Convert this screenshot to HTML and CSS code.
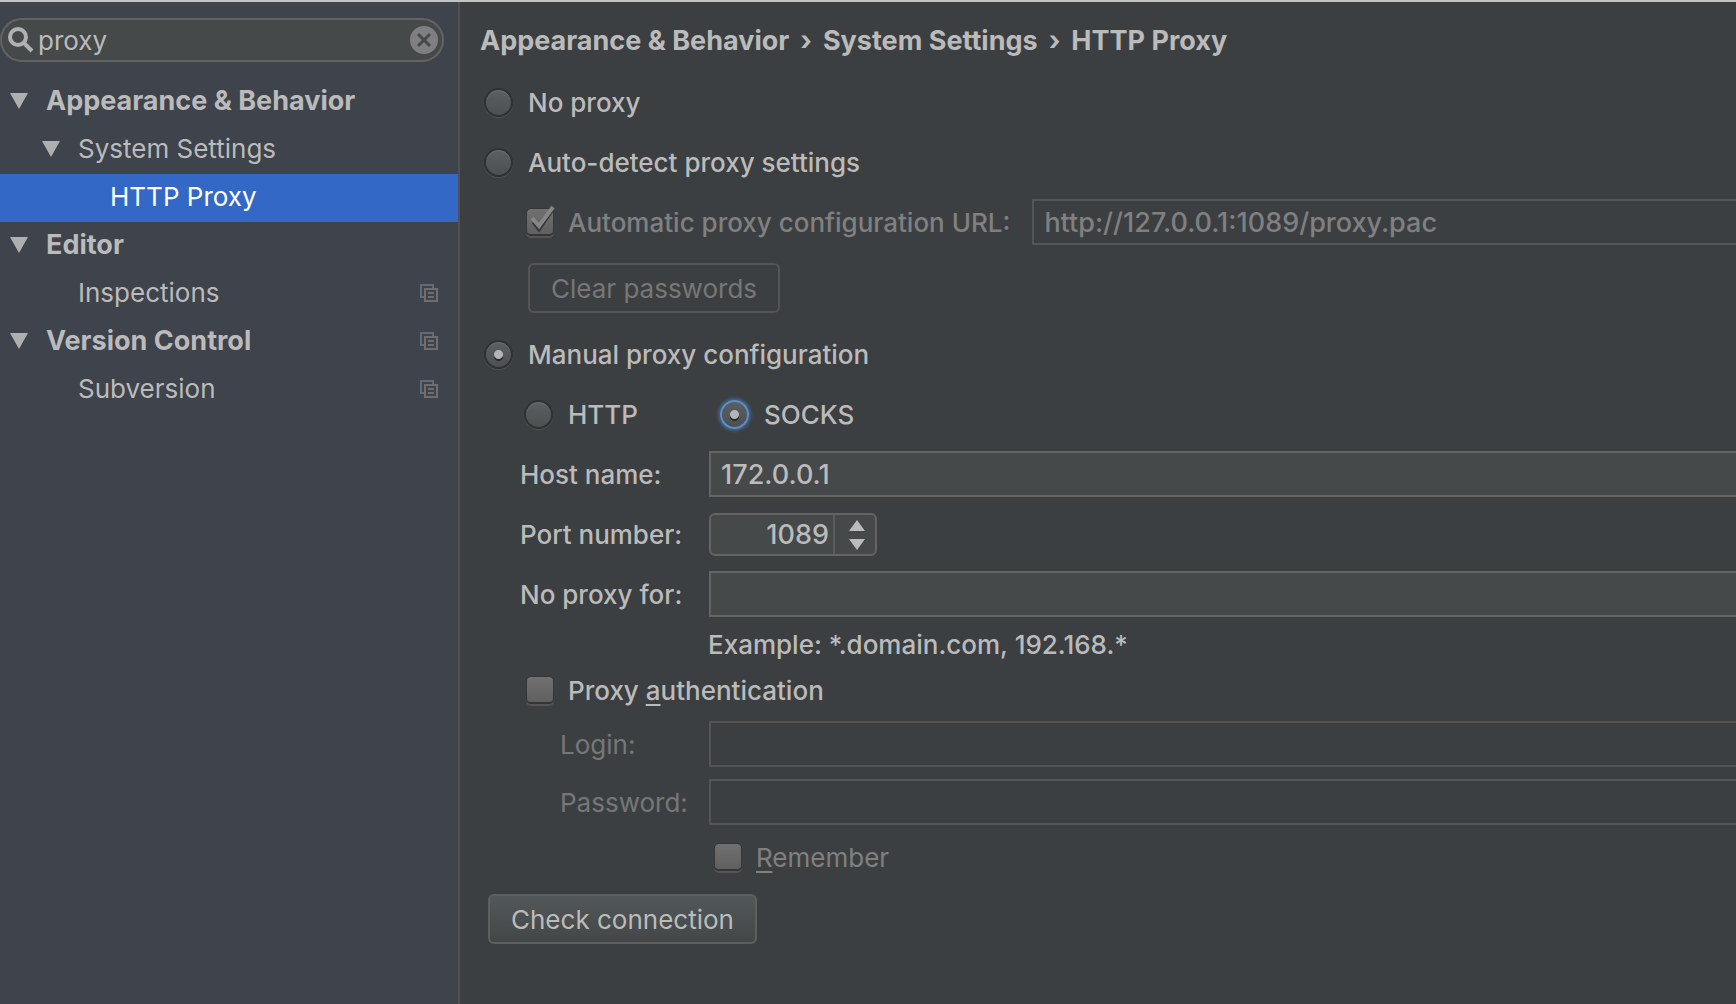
FILE: index.html
```html
<!DOCTYPE html>
<html lang="en">
<head>
<meta charset="utf-8">
<title>Settings - HTTP Proxy</title>
<link rel="stylesheet" href="styles.css">
</head>
<body>
<svg class="defs" width="0" height="0" aria-hidden="true">
  <symbol id="arrow" viewBox="0 0 18 16"><path d="M0 0H18L9 16Z" fill="#afafaf"/></symbol>
  <symbol id="copy" viewBox="0 0 18 18">
    <path d="M5 13H1V1H13V4" fill="none" stroke="#5f6d78" stroke-width="2"/>
    <path d="M5 5H17V17H5ZM8 9H14M8 13H14" fill="none" stroke="#6e6e6e" stroke-width="2"/>
  </symbol>
</svg>
<div class="window">
  <aside class="sidebar">
    <div class="search">
      <svg class="search-icon" width="26" height="26" viewBox="0 0 26 26" aria-hidden="true">
        <circle cx="10" cy="10" r="8" fill="none" stroke="#afb1b3" stroke-width="4"/>
        <path d="M15 15L24 24" stroke="#afb1b3" stroke-width="4"/>
      </svg>
      <input class="search-input" type="text" value="proxy" aria-label="Search settings">
      <button class="search-clear" type="button" aria-label="Clear search">
        <svg width="28" height="28" viewBox="0 0 28 28" aria-hidden="true">
          <circle cx="14" cy="14" r="14" fill="#7d7f80"/>
          <path d="M8 8L20 20M20 8L8 20" stroke="#45494a" stroke-width="3"/>
        </svg>
      </button>
    </div>
    <nav class="tree" aria-label="Settings">
      <a class="item group" href="#"><svg class="arrow"><use href="#arrow"/></svg><span>Appearance &amp; Behavior</span></a>
      <a class="item level-2" href="#"><svg class="arrow"><use href="#arrow"/></svg><span>System Settings</span></a>
      <a class="item level-3 selected" href="#"><span>HTTP Proxy</span></a>
      <a class="item group" href="#"><svg class="arrow"><use href="#arrow"/></svg><span>Editor</span></a>
      <a class="item leaf" href="#"><span>Inspections</span><svg class="copy"><use href="#copy"/></svg></a>
      <a class="item group" href="#"><svg class="arrow"><use href="#arrow"/></svg><span>Version Control</span><svg class="copy"><use href="#copy"/></svg></a>
      <a class="item leaf" href="#"><span>Subversion</span><svg class="copy"><use href="#copy"/></svg></a>
    </nav>
  </aside>

  <main class="content">
    <nav class="breadcrumb" aria-label="Breadcrumb">
      <a href="#">Appearance &amp; Behavior</a><span>›</span><a href="#">System Settings</a><span>›</span><a href="#">HTTP Proxy</a>
    </nav>
    <form>
      <div class="row">
        <input class="radio" type="radio" name="mode" id="none"><label for="none">No proxy</label>
      </div>
      <div class="row">
        <input class="radio" type="radio" name="mode" id="auto"><label for="auto">Auto-detect proxy settings</label>
      </div>
      <div class="row option dim">
        <span class="tick">
          <input class="checkbox" type="checkbox" id="pac" checked disabled>
          <svg class="tick-mark" width="28" height="32" viewBox="0 0 28 32" aria-hidden="true">
            <path d="M6 17L12 25L25 6" fill="none" stroke="#333536" stroke-width="3"/>
            <path d="M5 13L12 21L26 2" fill="none" stroke="#868686" stroke-width="4"/>
          </svg>
        </span>
        <label for="pac">Automatic proxy configuration URL:</label>
        <input class="field url" type="text" value="http://127.0.0.1:1089/proxy.pac" aria-label="Configuration URL" disabled>
      </div>
      <div class="row button-row clear-row">
        <button class="button" type="button" disabled>Clear passwords</button>
      </div>
      <div class="row">
        <input class="radio" type="radio" name="mode" id="manual" checked><label for="manual">Manual proxy configuration</label>
      </div>
      <div class="row indent">
        <span class="protocol"><input class="radio" type="radio" name="protocol" id="http"><label for="http">HTTP</label></span>
        <input class="radio focused" type="radio" name="protocol" id="socks" checked><label for="socks">SOCKS</label>
      </div>
      <div class="row form-row">
        <label for="host">Host name:</label>
        <input class="field" type="text" id="host" value="172.0.0.1">
      </div>
      <div class="row form-row">
        <label for="port">Port number:</label>
        <div class="spinner">
          <input class="spinner-input" type="text" id="port" value="1089">
          <div class="spinner-buttons">
            <button type="button" aria-label="Increase"><svg width="16" height="11" viewBox="0 0 16 11"><path d="M0 11L8 0L16 11Z" fill="#bbb"/></svg></button>
            <button type="button" aria-label="Decrease"><svg width="16" height="11" viewBox="0 0 16 11"><path d="M0 0L8 11L16 0Z" fill="#bbb"/></svg></button>
          </div>
        </div>
      </div>
      <div class="row form-row">
        <label for="bypass">No proxy for:</label>
        <input class="field" type="text" id="bypass">
      </div>
      <div class="row hint">Example: *.domain.com, 192.168.*</div>
      <div class="row option auth">
        <input class="checkbox" type="checkbox" id="auth"><label for="auth">Proxy <u>a</u>uthentication</label>
      </div>
      <div class="row form-row nested">
        <label for="login">Login:</label>
        <input class="field" type="text" id="login" disabled>
      </div>
      <div class="row form-row nested password">
        <label for="password">Password:</label>
        <input class="field" type="password" id="password" disabled>
      </div>
      <div class="row remember dim">
        <input class="checkbox" type="checkbox" id="remember" disabled><label for="remember"><u>R</u>emember</label>
      </div>
      <div class="row button-row">
        <button class="button" type="button">Check connection</button>
      </div>
    </form>
  </main>
</div>
</body>
</html>
```
FILE: styles.css
```css
* { box-sizing: border-box; }

body {
  margin: 0;
  background: #3c3f41;
  color: #bbb;
  font: 26px/30px Inter, "Liberation Sans", sans-serif;
}

input, button {
  margin: 0;
  padding: 0;
  border: 0;
  background: none;
  color: inherit;
  font: inherit;
  outline: 0;
}

a { color: inherit; text-decoration: none; }

.defs { position: absolute; }

.window {
  display: flex;
  min-height: 100vh;
  border-top: 2px solid #c4c4c4;
}

/* Sidebar */
.sidebar {
  flex: 0 0 460px;
  min-width: 0;
  padding-top: 16px;
  background: #3e434c;
  border-right: 2px solid #515151;
}

.search {
  display: flex;
  align-items: center;
  height: 44px;
  margin-right: 14px;
  padding: 0 4px 0 6px;
  border: 2px solid #646464;
  border-radius: 22px;
  background: #45494a;
}

.search-icon { flex: none; }
.search-input { flex: 1; min-width: 0; margin-left: 4px; padding-top: 2px; }
.search-clear { display: flex; }

.tree { margin-top: 16px; }

.item {
  display: flex;
  align-items: center;
  height: 48px;
  padding: 0 20px 2px 10px;
}

.arrow { flex: none; width: 18px; height: 16px; margin-right: 18px; }
.copy { flex: none; width: 18px; height: 18px; margin-left: auto; }
.group { font-size: 27px; font-weight: 700; }
.level-2 { padding-left: 42px; }
.leaf { padding-left: 78px; }
.level-3 { padding-left: 110px; }
.selected { background: #3368c6; color: #fff; }

/* Content */
.content { flex: 1; min-width: 0; padding: 24px 0 0 20px; }

.breadcrumb {
  display: flex;
  gap: 11px;
  margin-bottom: 16px;
  font-size: 27px;
  font-weight: 700;
}

.row {
  display: flex;
  align-items: center;
  height: 60px;
  padding-left: 4px;
  white-space: nowrap;
}

.row label { padding-top: 2px; font-weight: 500; }

.indent { padding-left: 44px; }
.option { padding-left: 46px; }
.dim { color: #808080; }
.protocol { display: flex; align-items: center; width: 196px; }

.radio {
  flex: none;
  appearance: none;
  width: 29px;
  height: 29px;
  margin-right: 15px;
  border: 2px solid #2f3132;
  border-radius: 50%;
  background: linear-gradient(#5b5f62, #4c5052);
  box-shadow: 0 1px 1px #555, inset 0 1px 1px #6c7073;
}

.radio:checked {
  background:
    radial-gradient(circle at 50% 50%, #b4b4b4 4px, transparent 5px),
    radial-gradient(circle at 50% 58%, #262829 4px, transparent 5px),
    linear-gradient(#5b5f62, #4c5052);
}

.radio.focused {
  border-color: #5c8fc5;
  box-shadow: 0 0 3px 2px #41638a;
}

.checkbox {
  flex: none;
  appearance: none;
  display: block;
  width: 28px;
  height: 28px;
  margin-right: 14px;
  border: 1px solid #333536;
  border-bottom-width: 2px;
  border-radius: 5px;
  background: linear-gradient(#707070, #606060);
  box-shadow: 0 2px 1px #545657;
}

.tick { position: relative; }
.tick-mark { position: absolute; left: 1px; top: -3px; pointer-events: none; }

.field {
  flex: 1;
  min-width: 0;
  height: 46px;
  padding: 0 10px;
  border: 2px solid #646464;
  border-right: 0;
  background: #45494a;
  font-size: 27px;
  font-weight: 500;
}

.field:disabled {
  border-color: #555;
  background: transparent;
  color: #808080;
}

.url { margin-left: 22px; }

.form-row { padding-left: 40px; }
.form-row label { flex: 0 0 189px; }

.nested { padding-left: 80px; color: #777; }
.nested label { flex-basis: 149px; font-weight: 400; }

.spinner {
  display: flex;
  width: 168px;
  height: 43px;
  border: 2px solid #646464;
  border-radius: 6px;
  background: #45494a;
}

.spinner-input {
  flex: 1;
  min-width: 0;
  padding: 2px 4px 0 0;
  font-size: 27px;
  font-weight: 500;
  text-align: right;
}

.spinner-buttons {
  display: flex;
  flex-direction: column;
  align-items: center;
  justify-content: center;
  gap: 8px;
  width: 42px;
  padding: 2px 0 0 4px;
  border-left: 2px solid #5a5c5d;
}

.spinner-buttons button { display: flex; }

.button-row { height: 70px; padding-left: 8px; }
.clear-row { height: 72px; padding-left: 48px; }

.button {
  height: 50px;
  padding: 2px 21px 0;
  border: 2px solid #5e6060;
  border-radius: 6px;
  background: linear-gradient(#525759, #434748);
}

.button:disabled { border-color: #555; background: none; color: #777; }

.hint { height: 42px; padding-left: 228px; font-weight: 500; }
.auth { height: 48px; }
.password { height: 56px; }
.remember { height: 54px; padding-left: 234px; }
.remember label { font-weight: 400; }

u { text-decoration-thickness: 2px; text-underline-offset: 4px; }
```
